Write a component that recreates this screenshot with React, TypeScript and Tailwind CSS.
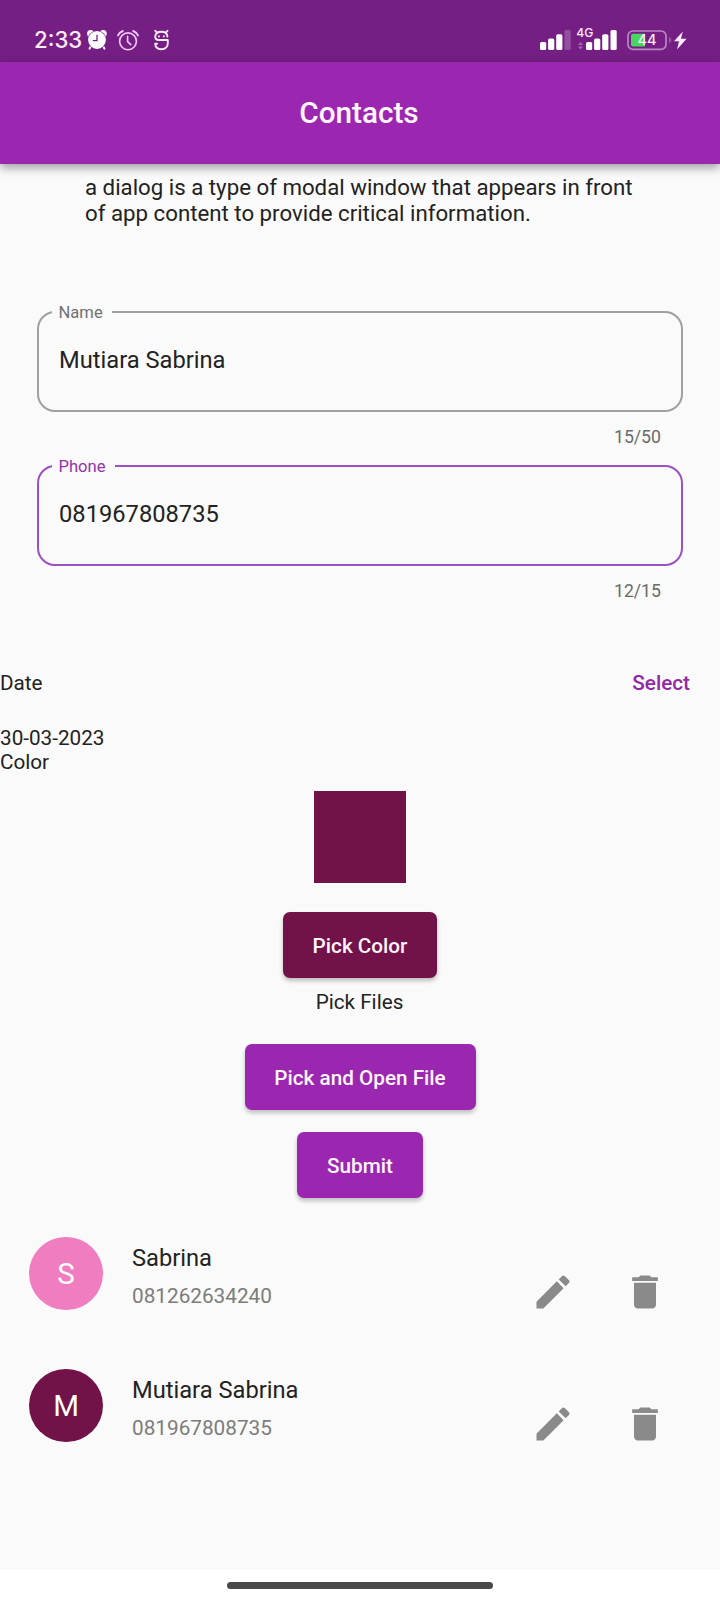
import type { ReactNode } from "react";

function SignalBars({ weak }: { weak?: boolean }) {
  return (
    <svg width="31" height="20" viewBox="0 0 31 20" fill="#fff" className="shrink-0">
      <rect x="0" y="12" width="6.2" height="8" rx="1.6" />
      <rect x="8.1" y="8.5" width="6.2" height="11.5" rx="1.6" />
      <rect x="16.2" y="4.2" width="6.2" height="15.8" rx="1.6" />
      <rect x="24.5" y="0" width="6.2" height="20" rx="1.6" opacity={weak ? 0.22 : 1} />
    </svg>
  );
}

function StatusBar() {
  return (
    <div className="flex h-[62px] shrink-0 items-start bg-[#751e84] text-[#fdeaff]">
      <span className="ml-[34px] mt-[25px] w-[53px] font-[Inter] text-[22.2px] leading-[30px] font-medium">2:33</span>
      <svg width="20" height="21" viewBox="0 0 20 21" className="mt-[29px]">
        <path d="M4.2 16.5 2.6 19.6M15.8 16.5l1.6 3.1" stroke="#fff" strokeWidth="2" strokeLinecap="round" />
        <circle cx="3.6" cy="4.4" r="3.5" fill="#fff" />
        <circle cx="16.2" cy="4.4" r="3.5" fill="#fff" />
        <circle cx="10" cy="11" r="9.4" fill="#751e84" />
        <circle cx="10" cy="11" r="8.9" fill="#fff" />
        <path d="M10 5.8V11.6H5.8" stroke="#751e84" strokeWidth="1.3" fill="none" />
      </svg>
      <svg width="22" height="22" viewBox="0 0 22 22" fill="none" stroke="#f3c8fb" strokeWidth="1.6" strokeLinecap="round" className="ml-[10px] mt-[29px]">
        <circle cx="11" cy="12.3" r="8.4" />
        <path d="M10.6 7.4V12.6L13.8 15.6" />
        <path d="M1 6.4Q2.4 3.4 5.8 2M21 6.4Q19.6 3.4 16.2 2" strokeWidth="1.9" />
      </svg>
      <svg width="17" height="22" viewBox="0 0 17 22" fill="none" stroke="#fdeaff" strokeWidth="1.9" strokeLinecap="round" strokeLinejoin="round" className="ml-[14px] mt-[29px]">
        <path d="M14.4 7.6Q14.2 2.8 8.4 2.8T2.2 7.6Q2.2 10.9 5 11H14.8V14.5Q14.4 20.2 8.4 20.2T2.2 14.8H4" />
        <path d="M2.3 1.8 4 3.6M14.5 1.8 12.8 3.6" />
        <path d="M6 7.1V7.6M10.8 7.1V7.6" strokeWidth="1.8" />
      </svg>
      <div className="ml-auto mt-[30px] flex">
        <SignalBars weak />
        <div className="relative ml-[6px] w-[9px]">
          <span className="absolute -top-[4.5px] -left-[0.8px] font-[Inter] text-[12.2px] leading-[14px] font-medium">4G</span>
          <svg width="7" height="8" viewBox="0 0 7 8" fill="#a565b1" className="mt-[12px]">
            <path d="M3.5 0 6.2 3H.8ZM3.5 7.6 6.2 4.6H.8Z" />
          </svg>
        </div>
        <SignalBars />
        <svg width="60" height="22" viewBox="0 0 60 22" className="-mt-px ml-[10px]">
          <rect x="1" y="2" width="38" height="18.4" rx="5" fill="none" stroke="#b987c4" strokeWidth="1.7" />
          <path d="M6 4.8H18V17.4H6Q4 17.4 4 15.4V6.8Q4 4.8 6 4.8Z" fill="#47d75f" />
          <text x="20" y="16.4" textAnchor="middle" fill="#fdeaff" fontFamily="Inter" fontSize="14.5" fontWeight="500">44</text>
          <path d="M42 8Q44.4 8.6 44.4 11T42 14.2Z" fill="#9a55a7" />
          <path d="M55.8 2.4 47 12.2H52L50 20.4 59.6 9.8H54Z" fill="#fdeaff" />
        </svg>
        <div className="w-[33px]" />
      </div>
    </div>
  );
}

function Field({ label, value, count, active }: { label: string; value: string; count: string; active?: boolean }) {
  return (
    <div className="mx-[37px] h-[154px]">
      <fieldset
        className={`h-[110px] rounded-[18px] border-2 pl-[13px] ${active ? "border-[#9b51c4]" : "border-[#a0a0a0]"}`}
      >
        <legend
          className={`h-[20px] pr-[9px] pl-[6.5px] text-[16.6px] leading-[21px] ${active ? "text-[#9431ad]" : "text-[#717171]"}`}
        >
          {label}
        </legend>
        <div className="mt-[24px] pl-[7px] text-[23.7px] leading-[28px]">{value}</div>
      </fieldset>
      <div className="mt-[15px] pr-[22px] text-right text-[17.7px] leading-[21px] text-[#6a6a6a]">{count}</div>
    </div>
  );
}

function Button({ className, children }: { className: string; children: ReactNode }) {
  return (
    <button
      className={`h-[66px] shrink-0 rounded-[7px] pt-[3px] text-[20.7px] font-medium text-[#fff5ff] shadow-[0_3px_4px_rgba(0,0,0,0.24)] ${className}`}
    >
      {children}
    </button>
  );
}

function Contact({ name, phone, color }: { name: string; phone: string; color: string }) {
  return (
    <div className="flex h-[132px] shrink-0 items-start">
      <div className={`mt-[7px] ml-[29.3px] mr-[29.2px] flex size-[73.5px] items-center justify-center rounded-full text-[29.5px] text-white ${color}`}>
        {name[0]}
      </div>
      <div className="flex-1">
        <div className="mt-[14px] text-[23.7px] leading-[28px]">{name}</div>
        <div className="mt-[12px] text-[20.75px] leading-[24px] text-[#7c7c7c]">{phone}</div>
      </div>
      <div className="mt-[40px] mr-[53px] flex gap-[48px]">
        <svg width="44" height="44" viewBox="0 0 24 24" fill="#8a8a8a">
          <path d="M3 17.25V21h3.75L17.81 9.94l-3.75-3.75L3 17.25zM20.71 7.04a.996.996 0 0 0 0-1.41l-2.34-2.34a.996.996 0 0 0-1.41 0l-1.83 1.83 3.75 3.75 1.83-1.83z" />
        </svg>
        <svg width="44" height="44" viewBox="0 0 24 24" fill="#8a8a8a">
          <path d="M6 19c0 1.1.9 2 2 2h8c1.1 0 2-.9 2-2V7H6v12zM19 4h-3.5l-1-1h-5l-1 1H5v2h14V4z" />
        </svg>
      </div>
    </div>
  );
}

export default function App() {
  return (
    <div className="flex h-[1600px] w-[720px] flex-col overflow-hidden bg-[#fafafa] font-[Roboto,sans-serif] text-[#222]">
      <StatusBar />
      <header className="flex h-[102.4px] shrink-0 items-center justify-center bg-[#9b27b0] pr-[2px] text-[29.7px] font-medium text-[#fff5ff] shadow-[0_4px_9px_rgba(0,0,0,0.36)]">
        <h1>Contacts</h1>
      </header>
      <p className="mt-[9.6px] mb-[76px] ml-[85px] w-[560px] text-[22.25px] leading-[26px]">
        a dialog is a type of modal window that appears in front of app content to provide critical information.
      </p>
      <Field label="Name" value="Mutiara Sabrina" count="15/50" />
      <Field label="Phone" value="081967808735" count="12/15" active />
      <div className="mt-[61px] flex justify-between text-[20.7px] leading-[24px]">
        <span>Date</span>
        <button className="mr-[30px] font-medium text-[#9228a6]">Select</button>
      </div>
      <div className="mt-[31px] text-[20.7px] leading-[24px]">
        <div>30-03-2023</div>
        <div>Color</div>
      </div>
      <div className="mt-[17px] flex flex-col items-center">
        <div className="size-[92px] bg-[#711348]" />
        <Button className="mt-[29.4px] w-[154px] bg-[#711348]">Pick Color</Button>
        <div className="mt-[11.6px] mb-[29.6px] pr-[1px] text-[20.7px] leading-[24px]">Pick Files</div>
        <Button className="w-[231px] bg-[#9b27b0]">Pick and Open File</Button>
        <Button className="mt-[22px] w-[126px] bg-[#9b27b0]">Submit</Button>
      </div>
      <div className="mt-[32.4px]">
        <Contact name="Sabrina" phone="081262634240" color="bg-[#ef7dbf]" />
        <Contact name="Mutiara Sabrina" phone="081967808735" color="bg-[#711348]" />
      </div>
      <div className="mt-auto flex h-[30px] shrink-0 justify-center bg-white pt-[12px]">
        <div className="h-[7px] w-[266px] rounded-full bg-[#494949]" />
      </div>
    </div>
  );
}
